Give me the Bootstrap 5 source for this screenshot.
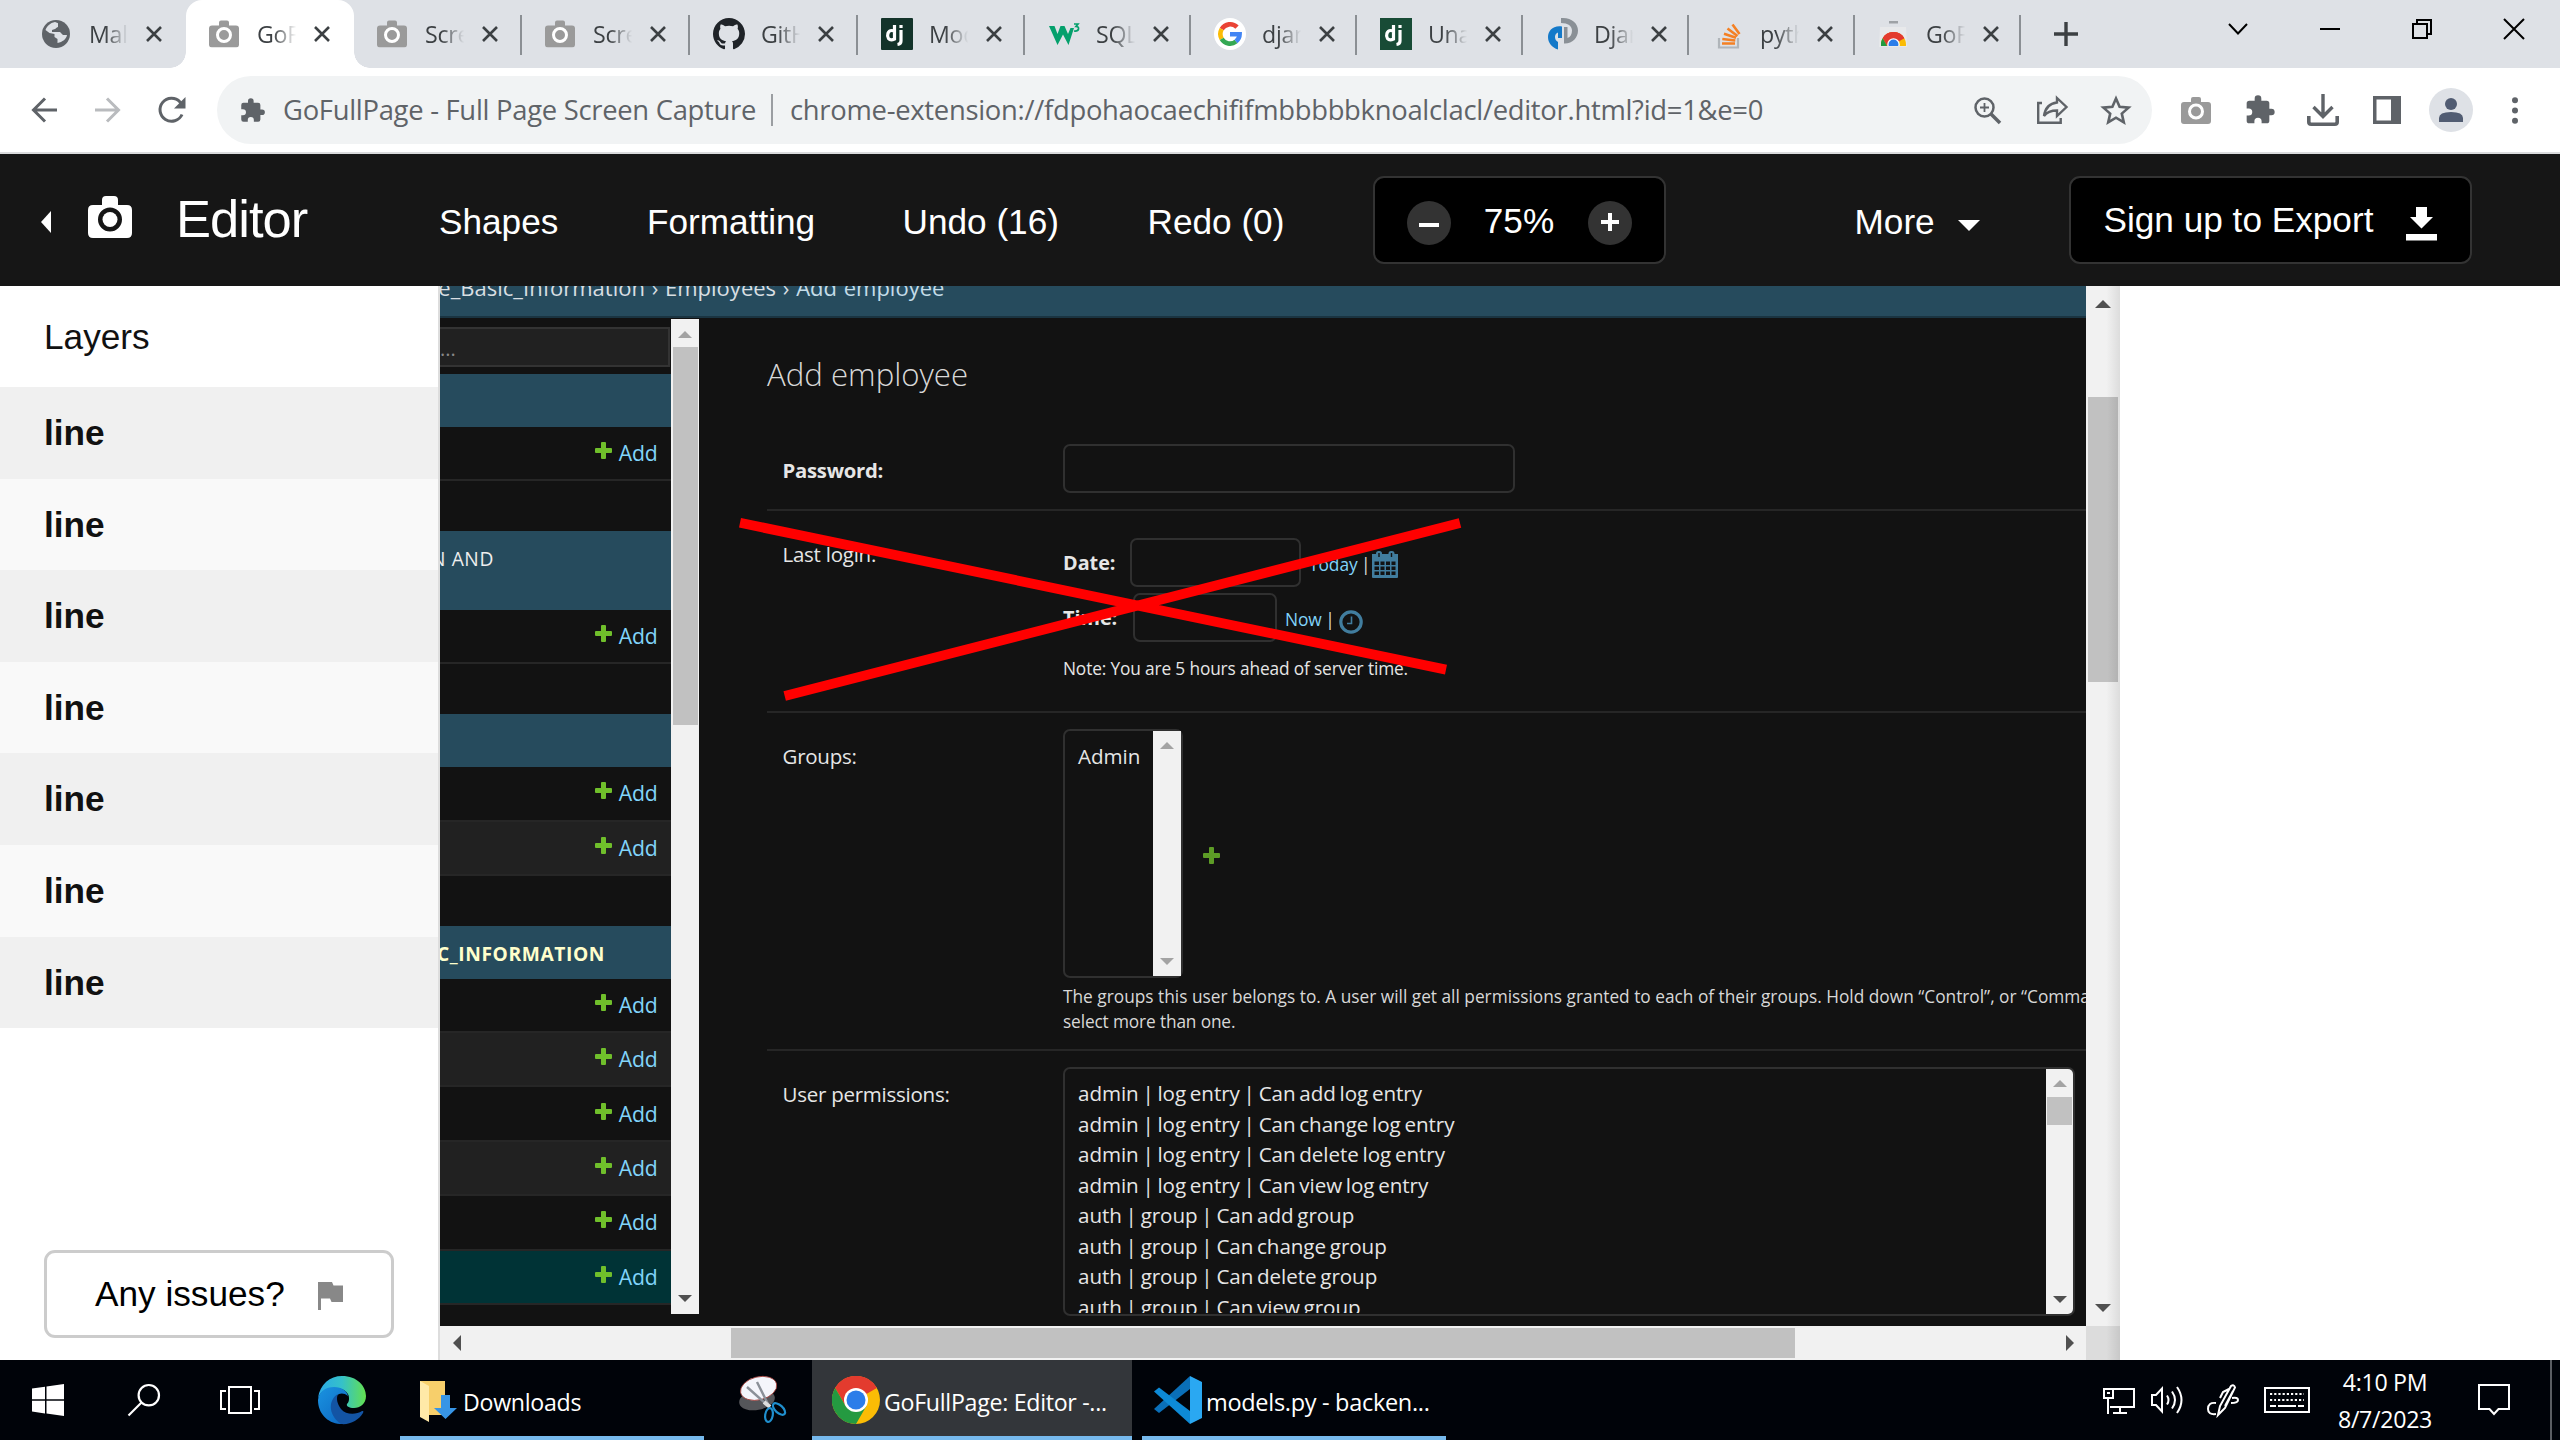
<!DOCTYPE html>
<html lang="en">
<head>
<meta charset="utf-8">
<title>GoFullPage: Editor</title>
<link href="https://cdn.jsdelivr.net/npm/bootstrap@5.3.0/dist/css/bootstrap.min.css" rel="stylesheet">
<script src="https://cdn.jsdelivr.net/npm/bootstrap@5.3.0/dist/js/bootstrap.bundle.min.js"></script>
<style>
html,body{width:2560px;height:1440px;overflow:hidden}
body{font-family:"Open Sans","Noto Sans",sans-serif;background:#fff;white-space:nowrap;line-height:1}
svg{display:block;flex:none;overflow:visible}
.ui-arial{font-family:"Liberation Sans",Arial,sans-serif;font-size:35.2px}
/* browser tabs */
.tabstrip{height:68px;background:#dee1e6;padding-left:18px;color:#3c4043}
.btab{width:168px;padding-left:23px;position:relative;flex:none}
.btab.mid{width:167px}
.btab.nar{width:166px}
.btab .fav{width:32px;height:32px}
.btab .ttl{width:40px;margin-left:16px;overflow:hidden;font-size:23.2px;letter-spacing:-.3px;line-height:67px;-webkit-mask-image:linear-gradient(90deg,#000 40%,transparent 98%);mask-image:linear-gradient(90deg,#000 40%,transparent 98%)}
.btab .cls{margin-left:17px}
.btab.sep::after{content:"";position:absolute;right:0;top:15px;width:2px;height:40px;background:#8b8f94}
.btab.on{background:#fff;border-radius:16px 16px 0 0}
.btab.on::before,.btab.on::after{content:"";position:absolute;bottom:0;width:16px;height:16px}
.btab.on::before{left:-16px;background:radial-gradient(circle at 0 0,transparent 15.5px,#fff 16px)}
.btab.on::after{right:-16px;background:radial-gradient(circle at 100% 0,transparent 15.5px,#fff 16px)}
.winbtns{margin-left:auto;height:58px;color:#000}
.winbtns>*{width:92px}
/* toolbar */
.addr{height:86px;border-bottom:2px solid #dadbdd;color:#5f6368}
.pill{width:1935px;height:68px;border-radius:34px;background:#f1f3f4;font-size:27.4px;letter-spacing:-.28px;line-height:66px}
.pill .bar{width:2px;height:32px;background:#9b9ea2}
/* editor header */
.edhead{height:132px;background:#161616;color:#fff;line-height:136px}
.edhead .brand{font-size:52.5px;letter-spacing:-1px;line-height:130px}
.bbox{height:88px;border:2px solid #333;border-radius:11px;background:#000}
.rnd{width:44px;height:44px;border-radius:50%;background:#333}
/* layers */
.layers{width:440px;border-right:2px solid #ddd;color:#111}
.layers h2{font-size:35.2px;margin:0;height:101px;line-height:101px;padding-left:44px;font-weight:400}
.layers .it{height:91.6px;line-height:91px;padding-left:44px;font-weight:700;background:#f0f0f0}
.layers .it:nth-child(odd){background:#f9f9f9}
.issues{height:88px;width:350px;margin:auto 0 22px 44px;border:3px solid #ccc;border-radius:11px;color:#000}
/* scrollbars */
.sbt{background:#f1f1f1;flex:none}
.thumb{background:#c1c1c1}
/* captured page */
.shot{width:1646px;height:1040px;background:#121212;color:#e6e6e6;font-size:20.5px;overflow:hidden;position:relative}
.crumbs{height:32px;background:#264b5d;border-bottom:2px solid #1a3441;font-size:22px;word-spacing:1px;line-height:24px;color:#d9dfe2}
.crumbs .tx{margin-top:-11px;margin-left:-14px}
.nav-a{width:231px;flex:none}
.srch{height:40px;margin:9px 1px 7px 0;background:#212121;border:2px solid #333;border-left:0;color:#888;font-size:20px;line-height:40px}
.cap{height:53px;background:#264b5d;color:#eee;font-size:19.2px;letter-spacing:.6px;line-height:56px}
.mrow{height:54.4px;border-bottom:2px solid #262626;color:#81d4fa;padding-right:13.5px;line-height:56px;font-size:21.2px;letter-spacing:-.2px}
.mrow.alt{background:#212121}
.mrow.sel{background:#003336}
.gap{height:49.7px}
.mrow svg{margin:-5px 7px 0 0}
.cont{margin-left:68px;width:879px}
.frow{border-bottom:2px solid #262626;padding-left:15.5px}
.lab{width:280.5px;flex:none;letter-spacing:-.25px}
.inp{border:2px solid #303030;border-radius:7px;flex:none}
.lnk{color:#81d4fa;font-size:17.4px;letter-spacing:-.1px;word-spacing:-1px}
.opt{line-height:30.5px;height:30.5px;letter-spacing:-.06px;word-spacing:-1.500px;font-size:20.6px}
.xlines{position:absolute;left:0;top:0}
/* taskbar */
.tbar{height:80px;background:#000309;color:#fff;font-size:23.2px;letter-spacing:-.3px;line-height:84px}
.tbtn{border-bottom:4px solid #76b9ed;height:80px;flex:none}
.tbtn.on{background:#33363a}
</style>
</head>
<body class="d-flex flex-column">
<svg width="0" height="0" class="position-absolute">
<defs>
<symbol id="cam" viewBox="0 0 44 42"><path fill-rule="evenodd" d="M5 9h9V4q0-4 4-4h8q4 0 4 4v5h9q5 0 5 5v23q0 5-5 5H5q-5 0-5-5V14q0-5 5-5zM22 11.500a12 12 0 1 0 0 24a12 12 0 1 0 0-24z" fill="currentColor"/><circle cx="22" cy="23.500" r="7.500" fill="currentColor"/></symbol>
<symbol id="camg" viewBox="0 0 30 28"><path d="M3 6h7V3q0-2 2-2h6q2 0 2 2v3h7q3 0 3 3v16q0 3-3 3H3q-3 0-3-3V9q0-3 3-3z" fill="#9a9a9a"/><circle cx="15" cy="15.500" r="6.500" fill="none" stroke="#fff" stroke-width="3"/></symbol>
<symbol id="x" viewBox="0 0 16 16"><path d="M1 1l14 14M15 1L1 15" stroke="currentColor" stroke-width="2.600" fill="none"/></symbol>
<symbol id="puz" viewBox="0 0 24 24"><path d="M20.500 11H19V7a2 2 0 0 0-2-2h-4V3.500a2.500 2.500 0 0 0-5 0V5H4a2 2 0 0 0-2 2v3.800h1.500a2.700 2.700 0 0 1 0 5.400H2V20a2 2 0 0 0 2 2h3.800v-1.500a2.700 2.700 0 0 1 5.400 0V22H17a2 2 0 0 0 2-2v-4h1.500a2.500 2.500 0 0 0 0-5z" fill="currentColor"/></symbol>
<symbol id="plus" viewBox="0 0 17 17"><path d="M6 1q0-1 1-1h3q1 0 1 1v5h5q1 0 1 1v3q0 1-1 1h-5v5q0 1-1 1H7q-1 0-1-1v-5H1q-1 0-1-1V7q0-1 1-1h5z" fill="#70bf2b"/></symbol>
<symbol id="up" viewBox="0 0 16 8"><path d="M8 0l8 8H0z" fill="currentColor"/></symbol>
<symbol id="dn" viewBox="0 0 16 8"><path d="M0 0h16L8 8z" fill="currentColor"/></symbol>
<symbol id="chr" viewBox="0 0 48 48"><circle cx="24" cy="24" r="24" fill="#fbbc05"/><path d="M24 24L3.200 12A24 24 0 0 1 44.800 12z" fill="#e33b2e"/><path d="M24 12h20.800A24 24 0 0 0 3.200 12L13.600 30z" fill="#e33b2e"/><path d="M3.200 12A24 24 0 0 0 24 48l10.400-18L24 30 13.600 30z" fill="#249a41"/><circle cx="24" cy="24" r="12" fill="#fff"/><circle cx="24" cy="24" r="9.500" fill="#2b7de9"/></symbol>
</defs>
</svg>

<div class="tabstrip d-flex align-items-stretch flex-none">
 <div class="btab d-flex align-items-center"><svg class="fav" viewBox="0 0 32 32"><circle cx="15" cy="16" r="14" fill="#5f6368"/><path d="M14 4c-5 1-8 4-9.500 8l4 3 5 1v3l3 2v4c5-1 9-4 9.500-8l-4-3-6-1-1-3 4-1V6z" fill="#dee1e6"/><path d="M17 4v5l-3 2-3 1v2h8l3 3h5c0-7-4-11-10-13zM4 16l6 5v5c-4-2-6-6-6-10z" fill="#5f6368"/></svg><span class="ttl">Mala</span><svg class="cls" width="16" height="16"><use href="#x"/></svg></div>
 <div class="btab on d-flex align-items-center"><svg class="fav" viewBox="0 0 32 32"><use href="#camg" y="1.500" x="0" width="30" height="28"/></svg><span class="ttl">GoFu</span><svg class="cls" width="16" height="16"><use href="#x"/></svg></div>
 <div class="btab sep d-flex align-items-center"><svg class="fav" viewBox="0 0 32 32"><use href="#camg" y="1.500" x="0" width="30" height="28"/></svg><span class="ttl">Scree</span><svg class="cls" width="16" height="16"><use href="#x"/></svg></div>
 <div class="btab sep d-flex align-items-center"><svg class="fav" viewBox="0 0 32 32"><use href="#camg" y="1.500" x="0" width="30" height="28"/></svg><span class="ttl">Scree</span><svg class="cls" width="16" height="16"><use href="#x"/></svg></div>
 <div class="btab sep d-flex align-items-center"><svg class="fav" viewBox="0 0 16 16"><path fill="#1f2328" d="M8 0C3.580 0 0 3.580 0 8c0 3.540 2.290 6.530 5.470 7.590.4.070.55-.17.55-.38 0-.19-.01-.82-.01-1.490-2.010.37-2.530-.49-2.690-.94-.09-.23-.48-.94-.82-1.130-.28-.15-.68-.52-.01-.53.63-.01 1.080.58 1.230.82.72 1.210 1.870.87 2.330.66.07-.52.28-.87.51-1.070-1.780-.2-3.640-.89-3.640-3.950 0-.87.31-1.590.82-2.150-.08-.2-.36-1.020.08-2.120 0 0 .67-.21 2.200.82.64-.18 1.320-.27 2-.27s1.360.09 2 .27c1.530-1.040 2.200-.82 2.200-.82.44 1.100.16 1.920.08 2.120.51.56.82 1.270.82 2.150 0 3.070-1.870 3.750-3.650 3.950.29.25.54.73.54 1.480 0 1.070-.01 1.930-.01 2.200 0 .21.15.46.55.38A8.010 8.010 0 0 0 16 8c0-4.420-3.580-8-8-8z"/></svg><span class="ttl">GitHu</span><svg class="cls" width="16" height="16"><use href="#x"/></svg></div>
 <div class="btab mid sep d-flex align-items-center"><svg class="fav" viewBox="0 0 32 32"><rect width="32" height="32" rx="1" fill="#13332a"/><path d="M13.500 7v14q-4 2-6-.5c-2-3-.5-8 3-8q2 0 3 .5M20 12v11q0 3-3.500 3.500" fill="none" stroke="#fff" stroke-width="3.200"/><rect x="18.400" y="7" width="3.200" height="3" fill="#fff"/></svg><span class="ttl">Mode</span><svg class="cls" width="16" height="16"><use href="#x"/></svg></div>
 <div class="btab nar sep d-flex align-items-center"><svg class="fav" viewBox="0 0 32 32"><path d="M1 8h5.500l3 8 3-8h4l3.500 8 2.500-6h3.500L20.500 27 15 16.500 9.500 27z" fill="#04a06c"/><path d="M26 6h4l-2 2.500q3 0 2.500 2.500t-4.500 2" fill="none" stroke="#04a06c" stroke-width="1.700"/></svg><span class="ttl">SQL T</span><svg class="cls" width="16" height="16"><use href="#x"/></svg></div>
 <div class="btab nar sep d-flex align-items-center"><svg class="fav" viewBox="0 0 32 32"><circle cx="16" cy="16" r="16" fill="#fff"/><g fill="none" stroke-width="4.600"><path d="M23 9.200A9.600 9.600 0 0 0 7.700 11.200" stroke="#ea4335"/><path d="M7.700 11.200a9.600 9.600 0 0 0 0 9.600" stroke="#fbbc05"/><path d="M7.700 20.800A9.600 9.600 0 0 0 22 23.500" stroke="#34a853"/><path d="M22 23.500A9.600 9.600 0 0 0 25.600 16.200H16" stroke="#4285f4"/></g></svg><span class="ttl">djang</span><svg class="cls" width="16" height="16"><use href="#x"/></svg></div>
 <div class="btab nar sep d-flex align-items-center"><svg class="fav" viewBox="0 0 32 32"><rect width="32" height="32" fill="#184b36"/><path d="M13.500 7v14q-4 2-6-.5c-2-3-.5-8 3-8q2 0 3 .5M20 12v11q0 3-3.500 3.500" fill="none" stroke="#fff" stroke-width="3.200"/><rect x="18.400" y="7" width="3.200" height="3" fill="#fff"/></svg><span class="ttl">Unab</span><svg class="cls" width="16" height="16"><use href="#x"/></svg></div>
 <div class="btab nar sep d-flex align-items-center"><svg class="fav" viewBox="0 0 32 32"><path d="M16 20V8.500C7 7 2 13 2 19c0 6 4 10.500 10 12.500V24c-2-1-3-3-3-5s1-4 3-4.500V20z" fill="#1479c9"/><path d="M15 0c10-1 17 5 17 12.500S26 26 18 25.500V9h3.500v11c3-1 4.500-4 4.500-7.500C26 8 22 5 15 5z" fill="#8a9096"/></svg><span class="ttl">Djang</span><svg class="cls" width="16" height="16"><use href="#x"/></svg></div>
 <div class="btab nar sep d-flex align-items-center"><svg class="fav" viewBox="0 0 32 32"><path d="M7 20v9.500h19V20" fill="none" stroke="#b0b5ba" stroke-width="2.200"/><path d="M10 25.500h13M10.300 21l13 1.500M12 15.800l12 4M15.500 10.500l10 7.500M20.500 6.500l7 9.500" stroke="#f48024" stroke-width="2.600"/></svg><span class="ttl">pytho</span><svg class="cls" width="16" height="16"><use href="#x"/></svg></div>
 <div class="btab nar sep d-flex align-items-center"><svg class="fav" viewBox="0 0 32 32"><path d="M2 9h26l1 20H1z" fill="#e8e9eb"/><rect x="11" y="3" width="9" height="2.500" fill="#9ea2a6"/><clipPath id="st"><rect x="3" y="10" width="26" height="18"/></clipPath><g clip-path="url(#st)"><use href="#chr" x="3" y="14" width="25" height="25"/></g></svg><span class="ttl">GoFu</span><svg class="cls" width="16" height="16"><use href="#x"/></svg></div>
 <div class="d-flex align-items-center" style="padding-left:33px"><svg width="24" height="24" viewBox="0 0 24 24"><path d="M12 0v24M0 12h24" stroke="#3c4043" stroke-width="3.400"/></svg></div>
 <div class="winbtns d-flex align-items-center">
  <span class="d-flex justify-content-center"><svg width="20" height="11" viewBox="0 0 20 11"><path d="M1 0l9 9.500L19 0" fill="none" stroke="#000" stroke-width="2"/></svg></span>
  <span class="d-flex justify-content-center"><svg width="20" height="2"><rect width="20" height="2"/></svg></span>
  <span class="d-flex justify-content-center"><svg width="20" height="20" viewBox="0 0 20 20"><path d="M1 5h14v14H1zM5 5V1h14v14h-4" fill="none" stroke="#000" stroke-width="2"/></svg></span>
  <span class="d-flex justify-content-center"><svg width="20" height="20" viewBox="0 0 20 20"><path d="M0 0l20 20M20 0L0 20" stroke="#000" stroke-width="2"/></svg></span>
 </div>
</div>

<div class="addr d-flex align-items-center bg-white">
 <svg width="26" height="26" viewBox="0 0 26 26" style="margin-left:31px"><path d="M26 13H3M14 1.500L2.500 13 14 24.500" fill="none" stroke="#5f6368" stroke-width="3"/></svg>
 <svg width="26" height="26" viewBox="0 0 26 26" style="margin-left:38px"><path d="M0 13h23M12 1.500L23.500 13 12 24.500" fill="none" stroke="#b9bbbe" stroke-width="3"/></svg>
 <svg width="28" height="26" viewBox="0 0 28 26" style="margin-left:37px"><path d="M24 17.500A11.500 11.500 0 1 1 22 5l3 4" fill="none" stroke="#5f6368" stroke-width="3"/><path d="M27.500 0v11.500H16z" fill="#5f6368"/></svg>
 <div class="pill d-flex align-items-center" style="margin-left:31px">
  <svg width="27" height="27" style="margin-left:22px"><use href="#puz"/></svg>
  <span style="margin-left:17px;width:488px">GoFullPage - Full Page Screen Capture</span>
  <span class="bar"></span>
  <span style="margin-left:17px;width:1184px">chrome-extension://fdpohaocaechififmbbbbbknoalclacl/editor.html?id=1&amp;e=0</span>
  <svg width="27" height="27" viewBox="0 0 27 27"><circle cx="10.500" cy="10.500" r="9" fill="none" stroke="#5f6368" stroke-width="2.500"/><path d="M10.500 6v9M6 10.500h9" stroke="#5f6368" stroke-width="1.800"/><path d="M17 17l9 9" stroke="#5f6368" stroke-width="3.600"/></svg>
  <svg width="31" height="28" viewBox="0 0 31 28" style="margin-left:36px"><path d="M5 7H1.200v19.800h22.500V22" fill="none" stroke="#5f6368" stroke-width="2.400"/><path d="M20 2l9.500 9L20 20v-5.500c-6 0-10 1.500-13 5.500 1-7 4-12.500 13-13.500z" fill="none" stroke="#5f6368" stroke-width="2.400"/></svg>
  <svg width="30" height="28" viewBox="0 0 30 28" style="margin-left:33px"><path d="M15 2.500l3.600 8.300 9 .8-6.800 6 2 8.800-7.800-4.700-7.800 4.700 2-8.800-6.800-6 9-.8z" fill="none" stroke="#5f6368" stroke-width="2.600"/></svg>
 </div>
 <svg width="30" height="28" style="margin-left:29px"><use href="#camg"/></svg>
 <svg width="32" height="32" style="margin-left:33px"><use href="#puz"/></svg>
 <svg width="32" height="32" viewBox="0 0 32 32" style="margin-left:31px"><path d="M16 0v21M6.500 13l9.500 9.500L25.500 13" fill="none" stroke="#5f6368" stroke-width="3.400"/><path d="M1.800 22v6q0 2.200 2.400 2.200h23.600q2.400 0 2.400-2.200v-6" fill="none" stroke="#5f6368" stroke-width="3.600"/></svg>
 <svg width="28" height="28" viewBox="0 0 28 28" style="margin-left:34px"><path fill-rule="evenodd" d="M0 0h28v28H0zM3.500 3.500v21H18v-21z" fill="#5f6368"/></svg>
 <svg width="44" height="44" viewBox="0 0 44 44" style="margin-left:28px"><circle cx="22" cy="22" r="22" fill="#dee1e6"/><circle cx="22" cy="16" r="6" fill="#515c72"/><path d="M10 34v-4q0-6 12-6t12 6v4z" fill="#515c72"/></svg>
 <svg width="6" height="27" viewBox="0 0 6 27" style="margin-left:39px" fill="#5f6368"><circle cx="3" cy="3.200" r="3"/><circle cx="3" cy="13.500" r="3"/><circle cx="3" cy="23.800" r="3"/></svg>
</div>

<div class="edhead ui-arial d-flex">
 <svg width="10" height="22" viewBox="0 0 10 22" style="margin:57px 0 0 41px"><path d="M10 0v22L0 11z" fill="#fff"/></svg>
 <svg width="44" height="42" style="margin:42px 0 0 37px"><use href="#cam"/></svg>
 <span class="brand" style="margin-left:44px;width:263px">Editor</span>
 <span style="width:208px">Shapes</span>
 <span style="width:255.500px">Formatting</span>
 <span style="width:245px">Undo (16)</span>
 <span style="width:225px">Redo (0)</span>
 <div class="bbox d-flex align-items-center" style="width:293px;margin-top:22px;padding:5px 32px 0 32px;line-height:82px">
  <span class="rnd d-flex align-items-center justify-content-center"><svg width="20" height="4" style="margin-top:5px"><rect width="20" height="4" fill="#fff"/></svg></span>
  <span style="margin:-4px auto 0">75%</span>
  <span class="rnd d-flex align-items-center justify-content-center"><svg width="20" height="20" viewBox="0 0 20 20" style="margin-top:-2px"><path d="M10 1v18M1 10h18" stroke="#fff" stroke-width="4"/></svg></span>
 </div>
 <span style="margin-left:189px;width:103px">More</span>
 <svg width="22" height="11" viewBox="0 0 22 11" style="margin-top:66px"><path d="M0 0h22L11 11z" fill="#fff"/></svg>
 <div class="bbox d-flex" style="width:403px;margin:22px 0 0 89px;padding-left:33px;line-height:84px">
  <span style="width:302px">Sign up to Export</span>
  <svg width="31" height="34" viewBox="0 0 31 34" style="margin-top:29px"><path d="M10 0h11v10h6L15.500 21.500 4 10h6zM0 27h31v6.500H0z" fill="#fff"/></svg>
 </div>
</div>

<div class="d-flex" style="height:1074px">
 <aside class="layers ui-arial d-flex flex-column">
  <h2>Layers</h2>
  <div class="it">line</div><div class="it">line</div><div class="it">line</div><div class="it">line</div><div class="it">line</div><div class="it">line</div><div class="it">line</div>
  <div class="issues d-flex align-items-center" style="padding-left:48px"><span style="width:223px;line-height:82px">Any issues?</span><svg width="25" height="28" viewBox="0 0 25 28" style="margin-top:4px"><path d="M0 0h14l1.500 3.500H25V20H13.500L12 16.500H3V28H0z" fill="#888"/></svg></div>
 </aside>
 <div class="d-flex flex-column">
  <div class="shot">
   <div class="crumbs d-flex"><div class="tx"><span>ee_Basic_Information</span> › <span>Employees</span> › <span style="color:#c4dce8">Add employee</span></div></div>
   <div class="d-flex">
    <nav class="nav-a">
     <div class="srch">...</div>
     <div class="cap"></div>
     <div class="mrow d-flex align-items-center justify-content-end"><svg width="17" height="17"><use href="#plus"/></svg>Add</div>
     <div class="gap"></div>
     <div class="cap" style="height:79px;margin-left:-13px;padding-left:4px;line-height:55px">N AND</div>
     <div class="mrow d-flex align-items-center justify-content-end"><svg width="17" height="17"><use href="#plus"/></svg>Add</div>
     <div class="gap"></div>
     <div class="cap"></div>
     <div class="mrow d-flex align-items-center justify-content-end"><svg width="17" height="17"><use href="#plus"/></svg>Add</div>
     <div class="mrow alt d-flex align-items-center justify-content-end"><svg width="17" height="17"><use href="#plus"/></svg>Add</div>
     <div class="gap"></div>
     <div class="cap fw-bold d-flex justify-content-end overflow-hidden" style="color:#ffffcc;padding-right:66px">C_INFORMATION</div>
     <div class="mrow d-flex align-items-center justify-content-end"><svg width="17" height="17"><use href="#plus"/></svg>Add</div>
     <div class="mrow alt d-flex align-items-center justify-content-end"><svg width="17" height="17"><use href="#plus"/></svg>Add</div>
     <div class="mrow d-flex align-items-center justify-content-end"><svg width="17" height="17"><use href="#plus"/></svg>Add</div>
     <div class="mrow alt d-flex align-items-center justify-content-end"><svg width="17" height="17"><use href="#plus"/></svg>Add</div>
     <div class="mrow d-flex align-items-center justify-content-end"><svg width="17" height="17"><use href="#plus"/></svg>Add</div>
     <div class="mrow sel d-flex align-items-center justify-content-end"><svg width="17" height="17"><use href="#plus"/></svg>Add</div>
    </nav>
    <div class="sbt d-flex flex-column align-items-center" style="width:28px;height:995px;margin-top:1px">
     <svg width="14" height="7" style="margin:12px 0 9px;color:#a3a3a3"><use href="#up"/></svg>
     <div class="thumb" style="width:25px;height:378px"></div>
     <svg width="14" height="7" style="margin:auto 0 12px;color:#505050"><use href="#dn"/></svg>
    </div>
    <main class="cont flex-shrink-0" style="width:1330px">
     <h1 style="font-size:31.200px;font-weight:300;margin:0;height:109px;padding-top:36px;line-height:40px;color:#d8d8d8">Add employee</h1>
     <div class="frow d-flex" style="height:84px;padding-top:17px"><b class="lab" style="font-size:20.300px;line-height:52px">Password:</b><span class="inp" style="width:452px;height:49px"></span></div>
     <div class="frow d-flex" style="height:201.500px;padding-top:26.500px"><span class="lab" style="line-height:33px">Last login:</span>
      <div>
       <div class="d-flex" style="height:55px;line-height:50px"><b style="width:67px;font-size:19.800px">Date:</b><span class="inp" style="width:171px;height:49px"></span><span class="lnk" style="margin-left:8px;line-height:52px">Today <span style="color:#ddd">|</span></span><svg width="26" height="27" viewBox="0 0 26 27" style="margin:13px 0 0 2px"><path d="M0 3h26v23q0 1-1 1H1q-1 0-1-1z" fill="#417d9e"/><path d="M2.500 10.500H7V14H2.500zM8.500 10.500h4V14h-4zM14 10.500h4V14h-4zM19.500 10.500h4V14h-4zM2.500 15.500H7V19H2.500zM8.500 15.500h4V19h-4zM14 15.500h4V19h-4zM19.500 15.500h4V19h-4zM2.500 20.500H7V24H2.500zM8.500 20.500h4V24h-4zM14 20.500h4V24h-4zM19.500 20.500h4V24h-4z" fill="#121212"/><rect x="4" y="0" width="6" height="8" rx="2.500" fill="#417d9e"/><rect x="16.500" y="0" width="6" height="8" rx="2.500" fill="#417d9e"/><path d="M7 2v4M19.500 2v4" stroke="#121212" stroke-width="1.400"/></svg></div>
       <div class="d-flex" style="height:55px;line-height:50px"><b style="width:70px;font-size:19.800px">Time:</b><span class="inp" style="width:144px;height:49px"></span><span class="lnk" style="margin-left:8px;line-height:52px">Now <span style="color:#ddd">|</span></span><svg width="24" height="24" viewBox="0 0 24 24" style="margin:17px 0 0 4px"><circle cx="12" cy="12" r="10.200" fill="none" stroke="#417d9e" stroke-width="3.200"/><path d="M12.500 6.500v7H8" fill="none" stroke="#417d9e" stroke-width="1.600"/></svg></div>
       <div style="font-size:17.300px;letter-spacing:-.14px;line-height:42px">Note: You are 5 hours ahead of server time.</div>
      </div>
     </div>
     <div class="frow d-flex" style="height:338.500px;padding-top:16.500px"><span class="lab" style="line-height:55px;font-size:20.500px">Groups:</span>
      <div>
       <div class="d-flex align-items-center"><div class="inp d-flex" style="width:120px;height:249px"><div style="width:89px;padding:10px 0 0 13px"><div class="opt">Admin</div></div><div class="sbt d-flex flex-column justify-content-between align-items-center" style="width:28px;padding:11px 0;color:#a3a3a3"><svg width="14" height="7"><use href="#up"/></svg><svg width="14" height="7"><use href="#dn"/></svg></div></div><svg width="17" height="17" style="margin:3px 0 0 20px;opacity:.8"><use href="#plus"/></svg></div>
       <div style="font-size:17.300px;line-height:25px;padding-top:6px;color:#d8d8d8">The groups this user belongs to. A user will get all permissions granted to each of their groups. Hold down “Control”, or “Command” on a Mac, to<br><span style="letter-spacing:-.14px">select more than one.</span></div>
      </div>
     </div>
     <div class="frow d-flex" style="height:270px;padding-top:16px;border:0"><span class="lab" style="line-height:54px;font-size:20.500px">User permissions:</span>
      <div class="inp d-flex overflow-hidden" style="width:1012px;height:249px"><div style="width:982px;padding:9px 0 0 13px;height:244px;overflow:hidden">
       <div class="opt">admin | log entry | Can add log entry</div><div class="opt">admin | log entry | Can change log entry</div><div class="opt">admin | log entry | Can delete log entry</div><div class="opt">admin | log entry | Can view log entry</div><div class="opt">auth | group | Can add group</div><div class="opt">auth | group | Can change group</div><div class="opt">auth | group | Can delete group</div><div class="opt">auth | group | Can view group</div></div>
       <div class="sbt d-flex flex-column align-items-center" style="width:27px"><svg width="14" height="7" style="margin:11px 0 10px;color:#a3a3a3"><use href="#up"/></svg><div class="thumb" style="width:25px;height:28px"></div><svg width="14" height="7" style="margin:auto 0 11px;color:#505050"><use href="#dn"/></svg></div>
      </div>
     </div>
    </main>
   </div>
   <svg class="xlines" width="1646" height="1040"><path d="M300 236.800L1006 383.600M344.700 410L1020 237" stroke="#f00" stroke-width="9.800" fill="none"/></svg>
  </div>
  <div class="sbt d-flex align-items-center justify-content-between" style="width:1646px;height:34px;padding:0 12px 0 13px">
   <svg width="8" height="16" viewBox="0 0 8 16"><path d="M8 0v16L0 8z" fill="#505050"/></svg>
   <div class="thumb" style="width:1064px;height:30px;margin-right:1px"></div>
   <svg width="8" height="16" viewBox="0 0 8 16"><path d="M0 0v16l8-8z" fill="#505050"/></svg>
  </div>
 </div>
 <div class="d-flex flex-column" style="width:34px;background:linear-gradient(90deg,#f1f1f1 60%,#dcdcdc)">
  <div class="d-flex flex-column align-items-center" style="height:1040px">
   <svg width="16" height="8" style="margin:14px 0 0;color:#505050"><use href="#up"/></svg>
   <div style="width:30px;height:285px;margin-top:89px;background:linear-gradient(90deg,#c1c1c1 65%,#b2b2b2)"></div>
   <svg width="16" height="8" style="margin:auto 0 14px;color:#505050"><use href="#dn"/></svg>
  </div>
  <div style="height:34px;background:linear-gradient(90deg,#dcdcdc 60%,#c8c8c8)"></div>
 </div>
</div>

<div class="tbar d-flex">
 <svg width="32" height="32" viewBox="0 0 32 32" style="margin:24px 0 0 32px" fill="#fff"><path d="M0 4.500L13 2.700V15.300H0zM14.500 2.500L32 0v15.300H14.500zM0 16.800h13v12.600L0 27.500zM14.500 16.800H32V32l-17.500-2.500z"/></svg>
 <svg width="32" height="32" viewBox="0 0 32 32" style="margin:24px 0 0 64px" fill="none" stroke="#fff" stroke-width="2.200"><circle cx="20.800" cy="11.200" r="10.200"/><path d="M13.500 18.500L.5 31.500"/></svg>
 <svg width="40" height="28" viewBox="0 0 40 28" style="margin:26px 0 0 60px" fill="none" stroke="#fff" stroke-width="2"><path d="M9 1h22v26H9zM6 5H1v18h5M34 5h5v18h-5"/></svg>
 <svg width="48" height="48" viewBox="0 0 48 48" style="margin:16px 0 0 58px"><defs><linearGradient id="e1" x1="0" x2="1"><stop offset="0" stop-color="#2aa9e8"/><stop offset=".5" stop-color="#35c1c9"/><stop offset="1" stop-color="#63e04f"/></linearGradient><linearGradient id="e2" x1="0" y1="0" x2="1" y2="1"><stop offset="0" stop-color="#1a93e0"/><stop offset="1" stop-color="#0b63c0"/></linearGradient></defs><path d="M0 22C2 8 12 0 24 0c15 0 24 10 24 20 0 8-6 12-12 12-5 0-8-2-7-4 2-2 2-4 2-6 0-6-6-10-14-10C9 12 3 15 0 22z" fill="url(#e1)"/><path d="M0 24C1 15 8 11 16 11c8 0 13 4 14 9-3-3-7-3-9-2-5 3-6 9-2 15 4 6 11 7 16 6-1 5-8 9-13 9C9 47 0 37 0 24z" fill="url(#e2)"/><path d="M20 18c-9 5-11 20 3 30 9 1 18-4 22-11 1-2 0-2-1-2-6 4-16 4-21-2-4-5-5-11-3-15z" fill="#1354a4"/></svg>
 <div class="tbtn d-flex" style="width:304px;margin-left:34px"><svg width="36" height="42" viewBox="0 0 36 42" style="margin:21px 7px 0 20px"><path d="M0 0h25v34H0z" fill="#f7cf6b"/><path d="M0 0l9 5v36L0 36z" fill="#ffe9a8"/><path d="M21 14h9v13h7L25.500 38 14 27h7z" fill="#3795e6"/></svg>Downloads</div>
 <svg width="48" height="48" viewBox="0 0 48 48" style="margin:16px 0 0 34px"><ellipse cx="19" cy="24" rx="18" ry="10" fill="#55565a" transform="rotate(-10 19 24)"/><ellipse cx="20.500" cy="12.500" rx="18.500" ry="11.500" fill="#f4f5fb" stroke="#a33b35" stroke-width=".8" transform="rotate(-14 20 12)"/><path d="M9 11l19 17M19 6l11 22" stroke="#8b9098" stroke-width="2.400"/><path d="M26 26l6 5" stroke="#ddd" stroke-width="4"/><ellipse cx="31" cy="39" rx="3.800" ry="7" fill="none" stroke="#1f8fce" stroke-width="2.200" transform="rotate(10 31 39)"/><ellipse cx="41" cy="33" rx="3.800" ry="7.500" fill="none" stroke="#1f8fce" stroke-width="2.200" transform="rotate(-48 41 33)"/></svg>
 <div class="tbtn on d-flex" style="width:320px;margin-left:26px"><svg width="48" height="48" style="margin:16px 4px 0 20px"><use href="#chr"/></svg>GoFullPage: Editor -...</div>
 <div class="tbtn d-flex" style="width:304px;margin-left:10px"><svg width="48" height="48" viewBox="0 0 48 48" style="margin:16px 4px 0 12px"><path d="M0 33L36 0v13L5 37z" fill="#0a6fb8"/><path d="M5 11.500L36 35v13L0 15.500z" fill="#0d8ad6"/><path d="M36 0l12 6v36l-12 6z" fill="#2aa8f2"/></svg><span style="font-size:23.500px">models.py - backen...</span></div>
 <div class="ms-auto d-flex" style="width:457px">
  <svg width="32" height="27" viewBox="0 0 32 27" style="margin:28px 0 0 0" fill="none" stroke="#fff" stroke-width="2"><path d="M10 1h21v18H7M1 1h9v9H1zM5 10v16M17 19v5M10 25h14"/><path d="M4 5h3" /></svg>
  <svg width="32" height="28" viewBox="0 0 32 28" style="margin:26px 0 0 16px" fill="none" stroke="#fff" stroke-width="2"><path d="M1 9h4l6-6.500v23L5 19H1zM16 9.500q3 4.500 0 9M21 5.500q6 8.500 0 17M26 1q9 13 0 26"/></svg>
  <svg width="32" height="32" viewBox="0 0 32 32" style="margin:24px 0 0 24px" fill="none" stroke="#fff" stroke-width="2"><path d="M11 31l2-9L24 2q3-2 4 1.500L18 24zM22 5l-6 3-3 6M26 7l-8 15M9 19q-8-1-8 6 0 6 8 5M25 14q6-1 6 2 0 3-7 3"/></svg>
  <svg width="46" height="26" viewBox="0 0 46 26" style="margin:27px 0 0 25px" fill="none" stroke="#fff" stroke-width="2"><path d="M1 1h44v24H1z"/><path d="M6 7h34" stroke-dasharray="2.200 2"/><path d="M6 13h6M14 13h20M35 13h5" stroke-dasharray="2.200 2"/><path d="M6 19h6M14 19h18M34 19h6"/></svg>
  <div class="text-center" style="width:110px;margin-left:20px;line-height:37px;padding-top:4px">4:10 PM<br>8/7/2023</div>
  <svg width="32" height="32" viewBox="0 0 32 32" style="margin:24px 0 0 38px" fill="none" stroke="#fff" stroke-width="2"><path d="M1 1h30v24H20.500L16 30l-4.500-5H1z"/></svg>
  <span style="width:2px;height:80px;background:#5b5e63;margin-left:40px"></span>
 </div>
</div>
</body>
</html>
